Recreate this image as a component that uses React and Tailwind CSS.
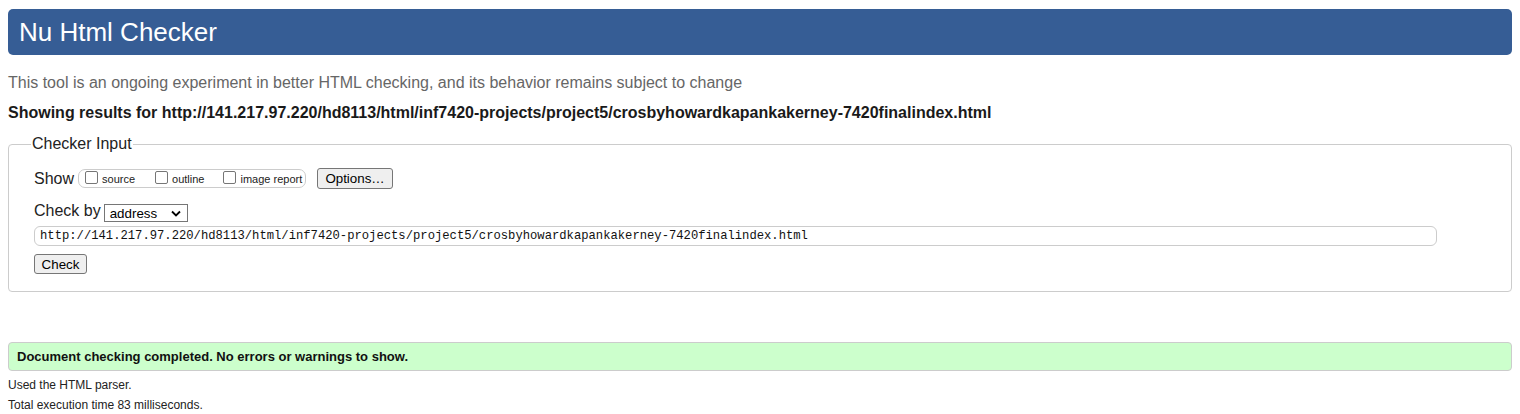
import React from "react";

function Box({ label }) {
  return (
    <label className="flex items-end">
      <span className="mb-[2px] mr-[4px] box-border inline-block h-[13px] w-[13px] rounded-[2px] border border-[#767676] bg-white" />
      <span className="text-[11px] leading-[13px] text-[#222]">{label}</span>
    </label>
  );
}

function Btn({ children }) {
  return (
    <div className="box-border flex h-full w-full items-center justify-center rounded-[3px] border border-[#767676] bg-[#efefef] text-[13.33px] leading-[15px] text-black">
      {children}
    </div>
  );
}

export default function App() {
  return (
    <div className="min-h-[414px] bg-white px-[8px] pt-[9px] text-[#222]" style={{ fontFamily: '"Liberation Sans", Arial, sans-serif' }}>
      <div className="flex h-[46px] items-center rounded-[5px] bg-[#365d95] pl-[11px]">
        <h1 className="text-[26px] leading-[30px] font-normal text-white">Nu Html Checker</h1>
      </div>
      <p className="mt-[19px] text-[16px] leading-[18px] text-[#666]">
        This tool is an ongoing experiment in better HTML checking, and its behavior remains subject to change
      </p>
      <p className="mt-[12px] text-[16px] leading-[18px] font-bold text-[#1a1a1a]">
        Showing results for http://141.217.97.220/hd8113/html/inf7420-projects/project5/crosbyhowardkapankakerney-7420finalindex.html
      </p>
      <fieldset className="mt-[13px] rounded-[4px] border border-[#cccccc] pb-[17px] pl-[25px] pr-[74px] pt-[14px]">
        <legend className="-ml-[3px] px-[1px] text-[16px] leading-[18px] text-[#222]">Checker Input</legend>
        <div className="flex h-[23px] items-center">
          <span className="text-[16px] leading-[18px]">Show</span>
          <div className="ml-[4px] box-border flex h-[19px] w-[228px] items-end rounded-[7px] border border-[#cccccc] pb-[1px] pl-[6px]">
            <Box label="source" />
            <div className="ml-[20px]">
              <Box label="outline" />
            </div>
            <div className="ml-[19px]">
              <Box label="image report" />
            </div>
          </div>
          <div className="ml-[11px] h-[21px] w-[76px]">
            <Btn>Options…</Btn>
          </div>
        </div>
        <div className="mt-[12px] flex h-[20px] items-start">
          <span className="text-[16px] leading-[18px]">Check by</span>
          <div className="ml-[3px] mt-[2px] box-border flex h-[18px] w-[84px] items-center justify-between border border-[#767676] bg-white pl-[5px] pr-[6px]">
            <span className="text-[13.33px] leading-[15px] text-black">address</span>
            <svg width="10" height="7" viewBox="0 0 10 7" fill="none">
              <path d="M1 1.5 L5 5.5 L9 1.5" stroke="#000" strokeWidth="1.8" />
            </svg>
          </div>
        </div>
        <div className="mt-[4px] box-border flex h-[20px] items-center rounded-[6px] border border-[#cccccc] pl-[5px]">
          <span className="text-[12.2px] leading-[14px] text-[#111]" style={{ fontFamily: '"Liberation Mono", "DejaVu Sans Mono", monospace' }}>
            http://141.217.97.220/hd8113/html/inf7420-projects/project5/crosbyhowardkapankakerney-7420finalindex.html
          </span>
        </div>
        <div className="mt-[8px] h-[20px] w-[53px]">
          <Btn>Check</Btn>
        </div>
      </fieldset>
      <div className="mt-[50px] box-border flex h-[29px] items-center rounded-[4px] border border-[#cccccc] bg-[#ccffcc] pl-[8px]">
        <span className="text-[13px] leading-[15px] font-bold text-[#111]">Document checking completed. No errors or warnings to show.</span>
      </div>
      <p className="mt-[7px] text-[12px] leading-[14px] text-[#222]">Used the HTML parser.</p>
      <p className="mt-[6px] text-[12px] leading-[14px] text-[#222]">Total execution time 83 milliseconds.</p>
    </div>
  );
}
